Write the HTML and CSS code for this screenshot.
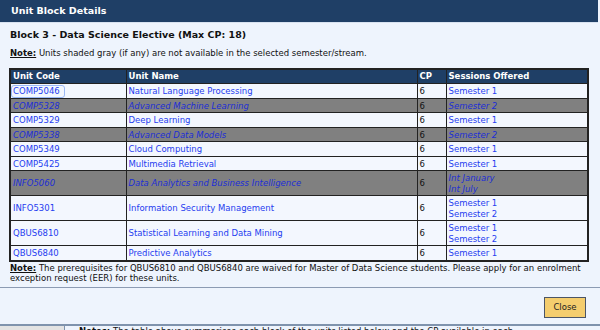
FILE: index.html
```html
<!DOCTYPE html>
<html lang="en">
<head>
    <meta charset="UTF-8">
    <meta name="viewport" content="width=device-width, initial-scale=1.0">
    <title>Unit Block Details</title>
    <link rel="stylesheet" href="styles.css">
</head>
<body>
    <div class="dialog">
        <div class="titlebar">Unit Block Details</div>
        <div class="content">
            <h2>Block 3 - Data Science Elective (Max CP: 18)</h2>
            <p class="note"><b>Note:</b> Units shaded gray (if any) are not available in the selected semester/stream.</p>

            <table class="units">
                <colgroup>
                    <col class="c-code">
                    <col class="c-name">
                    <col class="c-cp">
                    <col class="c-sess">
                </colgroup>
                <thead>
                    <tr>
                        <th>Unit Code</th>
                        <th>Unit Name</th>
                        <th>CP</th>
                        <th>Sessions Offered</th>
                    </tr>
                </thead>
                <tbody>
                    <tr>
                        <td><a href="#" class="focused">COMP5046</a></td>
                        <td><a href="#">Natural Language Processing</a></td>
                        <td>6</td>
                        <td><a href="#">Semester 1</a></td>
                    </tr>
                    <tr class="na">
                        <td><a href="#">COMP5328</a></td>
                        <td><a href="#">Advanced Machine Learning</a></td>
                        <td>6</td>
                        <td><a href="#">Semester 2</a></td>
                    </tr>
                    <tr>
                        <td><a href="#">COMP5329</a></td>
                        <td><a href="#">Deep Learning</a></td>
                        <td>6</td>
                        <td><a href="#">Semester 1</a></td>
                    </tr>
                    <tr class="na">
                        <td><a href="#">COMP5338</a></td>
                        <td><a href="#">Advanced Data Models</a></td>
                        <td>6</td>
                        <td><a href="#">Semester 2</a></td>
                    </tr>
                    <tr>
                        <td><a href="#">COMP5349</a></td>
                        <td><a href="#">Cloud Computing</a></td>
                        <td>6</td>
                        <td><a href="#">Semester 1</a></td>
                    </tr>
                    <tr>
                        <td><a href="#">COMP5425</a></td>
                        <td><a href="#">Multimedia Retrieval</a></td>
                        <td>6</td>
                        <td><a href="#">Semester 1</a></td>
                    </tr>
                    <tr class="na">
                        <td><a href="#">INFO5060</a></td>
                        <td><a href="#">Data Analytics and Business Intelligence</a></td>
                        <td>6</td>
                        <td><a href="#">Int January</a><br><a href="#">Int July</a></td>
                    </tr>
                    <tr>
                        <td><a href="#">INFO5301</a></td>
                        <td><a href="#">Information Security Management</a></td>
                        <td>6</td>
                        <td><a href="#">Semester 1</a><br><a href="#">Semester 2</a></td>
                    </tr>
                    <tr>
                        <td><a href="#">QBUS6810</a></td>
                        <td><a href="#">Statistical Learning and Data Mining</a></td>
                        <td>6</td>
                        <td><a href="#">Semester 1</a><br><a href="#">Semester 2</a></td>
                    </tr>
                    <tr>
                        <td><a href="#">QBUS6840</a></td>
                        <td><a href="#">Predictive Analytics</a></td>
                        <td>6</td>
                        <td><a href="#">Semester 1</a></td>
                    </tr>
                </tbody>
            </table>

            <p class="footnote"><b>Note:</b> The prerequisites for QBUS6810 and QBUS6840 are waived for Master of Data Science students. Please apply for an enrolment exception request (EER) for these units.</p>
        </div>
        <div class="buttons">
            <button type="button">Close</button>
        </div>
    </div>
    <div class="behind">
        <div class="behind-side"></div>
        <div class="behind-text"><b>Notes:</b> The table above summarises each block of the units listed below and the CP available in each.</div>
    </div>
</body>
</html>
```

FILE: styles.css
```css
body {
    margin: 0;
    background-color: #eef4fd;
    font-family: "DejaVu Sans", Verdana, sans-serif;
    font-size: 8.5px;
    line-height: 10.5px;
    color: #111;
    overflow: hidden;
}
.dialog {
    height: 324px;
    display: flex;
    flex-direction: column;
}
.titlebar {
    background-color: #1f3f66;
    color: #fff;
    font-weight: bold;
    font-size: 9.5px;
    height: 22px;
    line-height: 22px;
    padding-left: 11px;
    margin-right: 2px;
    border-bottom: 1px solid #d8e2f0;
}
.content {
    padding: 0 11px 0 9px;
}
h2 {
    font-size: 9.5px;
    margin: 5px 0 0 1px;
    line-height: 13px;
}
.note {
    margin: 7px 0 9px 1px;
}
.note b,
.footnote b {
    text-decoration: underline;
}
.units {
    width: 100%;
    border-collapse: collapse;
    border: 2px solid #222;
}
.c-code { width: 116px; }
.c-name { width: 291px; }
.c-cp { width: 29px; }
.units th {
    background-color: #1f3f66;
    color: #fff;
    text-align: left;
    padding: 1px 2px 2px;
    border: 1px solid #222;
}
.units td {
    background-color: #f3f7fe;
    padding: 2px 2px 1px;
    border: 1px solid #222;
    vertical-align: middle;
}
.units tr.na td {
    background-color: #808080;
}
.units tr.na a {
    font-style: italic;
    color: #1c2ed6;
}
a {
    color: #1f3df0;
    text-decoration: none;
}
a.focused {
    display: inline-block;
    margin: -1px 0 -1px -2px;
    padding: 0 4px 0 1px;
    border: 1px solid #9ab8f6;
    border-radius: 3px;
}
.footnote {
    margin: 1px 0 0 1px;
}
.buttons {
    margin-top: auto;
    border-top: 1px solid #8c9bb3;
    height: 36px;
    display: flex;
    justify-content: flex-end;
    align-items: center;
    padding-right: 14px;
}
.buttons button {
    font-family: "DejaVu Sans", Verdana, sans-serif;
    font-size: 8.5px;
    background-color: #f4cd6e;
    color: #222;
    border: 1px solid #4b5566;
    width: 42px;
    height: 21px;
    padding: 0;
    margin-top: 2px;
}
.behind {
    display: flex;
    border-top: 2px solid #7f93ad;
    height: 20px;
}
.behind-side {
    width: 64px;
    background-color: #e3e3e3;
    border-right: 1px solid #7f93ad;
}
.behind-text {
    padding-left: 14px;
    background-color: #eef4fd;
    flex: 1;
    white-space: nowrap;
    overflow: hidden;
}
```
